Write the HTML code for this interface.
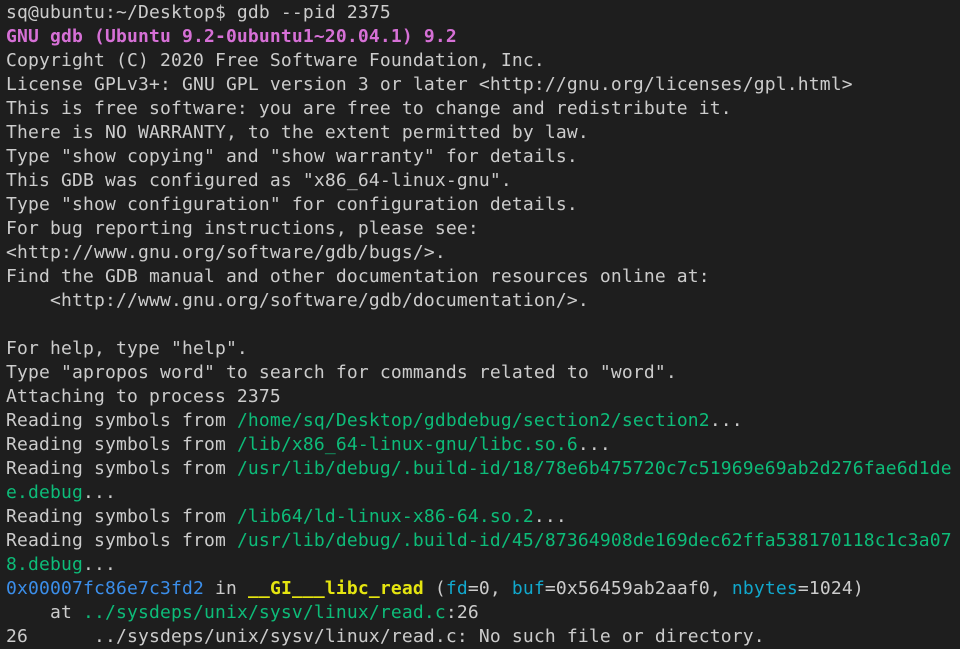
<!DOCTYPE html>
<html><head><meta charset="utf-8"><style>
html,body{margin:0;padding:0;background:#1e1e1e;width:960px;height:648px;overflow:hidden}
pre{margin:0;position:absolute;left:6px;top:1px;font-family:"DejaVu Sans Mono","Liberation Mono",monospace;font-size:18px;letter-spacing:0.16px;line-height:24px;color:#cccccc;white-space:pre}
.m{color:#d670d6;font-weight:bold}
.g{color:#0dbc79}
.b{color:#3b8eea}
.y{color:#e5e510;font-weight:bold}
.c{color:#11a8cd}
</style></head><body><pre>sq@ubuntu:~/Desktop$ gdb --pid 2375
<span class="m">GNU gdb (Ubuntu 9.2-0ubuntu1~20.04.1) 9.2</span>
Copyright (C) 2020 Free Software Foundation, Inc.
License GPLv3+: GNU GPL version 3 or later &lt;http://gnu.org/licenses/gpl.html&gt;
This is free software: you are free to change and redistribute it.
There is NO WARRANTY, to the extent permitted by law.
Type "show copying" and "show warranty" for details.
This GDB was configured as "x86_64-linux-gnu".
Type "show configuration" for configuration details.
For bug reporting instructions, please see:
&lt;http://www.gnu.org/software/gdb/bugs/&gt;.
Find the GDB manual and other documentation resources online at:
    &lt;http://www.gnu.org/software/gdb/documentation/&gt;.

For help, type "help".
Type "apropos word" to search for commands related to "word".
Attaching to process 2375
Reading symbols from <span class="g">/home/sq/Desktop/gdbdebug/section2/section2</span>...
Reading symbols from <span class="g">/lib/x86_64-linux-gnu/libc.so.6</span>...
Reading symbols from <span class="g">/usr/lib/debug/.build-id/18/78e6b475720c7c51969e69ab2d276fae6d1de</span>
<span class="g">e.debug</span>...
Reading symbols from <span class="g">/lib64/ld-linux-x86-64.so.2</span>...
Reading symbols from <span class="g">/usr/lib/debug/.build-id/45/87364908de169dec62ffa538170118c1c3a07</span>
<span class="g">8.debug</span>...
<span class="b">0x00007fc86e7c3fd2</span> in <span class="y">__GI___libc_read</span> (<span class="c">fd</span>=0, <span class="c">buf</span>=0x56459ab2aaf0, <span class="c">nbytes</span>=1024)
    at <span class="g">../sysdeps/unix/sysv/linux/read.c</span>:26
26      ../sysdeps/unix/sysv/linux/read.c: No such file or directory.
</pre></body></html>
